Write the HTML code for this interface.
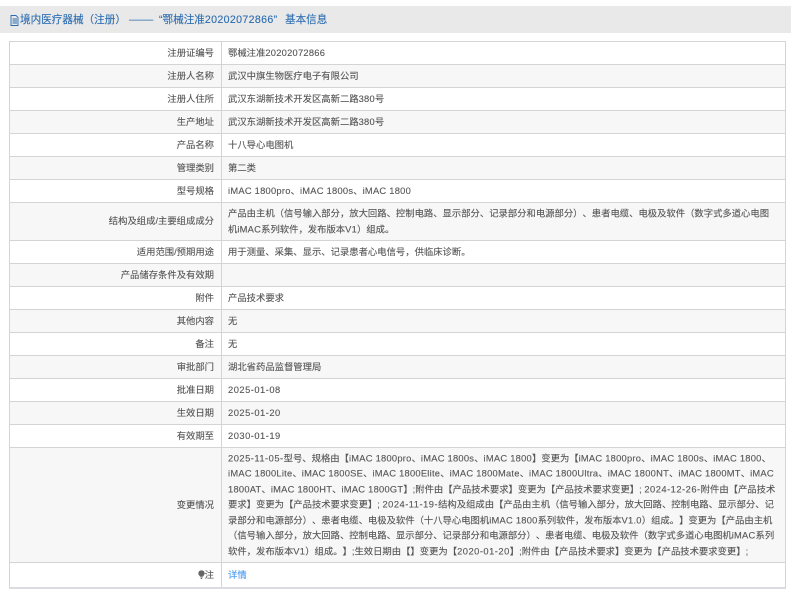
<!DOCTYPE html>
<html>
<head>
<meta charset="utf-8">
<style>
html,body{margin:0;padding:0;background:#fff;}
body{width:791px;height:590px;overflow:hidden;position:relative;font-family:"Liberation Sans","Noto Sans CJK SC",sans-serif;font-size:9.33px;color:#555;-webkit-text-stroke:.12px #555;text-spacing-trim:space-all;}
#hd{position:absolute;left:0;top:6px;width:791px;height:27px;background:#e9e9e9;color:#2b6cb0;-webkit-text-stroke:.12px #2b6cb0;font-size:10.6px;}
#hd span{position:absolute;top:1px;line-height:27px;white-space:nowrap;}
#ic{position:absolute;left:10px;top:9px;}
#tb{position:absolute;left:9px;top:41px;width:775px;height:545px;border:1px solid #d4d4d4;border-bottom:2px solid #dcdce0;box-sizing:content-box;}
.r{position:absolute;left:0;width:775px;border-bottom:1px solid #d4d4d4;box-sizing:border-box;}
.g{background:#f7f7f7;}
.l{position:absolute;left:0;width:204px;text-align:right;white-space:nowrap;top:calc(50% + .5px);transform:translateY(-50%);line-height:15.6px;}
.v{position:absolute;left:218px;white-space:nowrap;top:calc(50% + .5px);transform:translateY(-50%);line-height:15.6px;}
.e{letter-spacing:.25px;}
.d{letter-spacing:.5px;}
#dv{position:absolute;left:211px;top:0;width:1px;height:100%;background:#d4d4d4;}
a{color:#4a9bf0;text-decoration:none;-webkit-text-stroke:.12px #4a9bf0;}
</style>
</head>
<body>
<div id="hd">
<svg id="ic" width="9" height="11" viewBox="0 0 9 11"><path d="M1 .5h5l2 2v8H1zM2.500 4h4.500M2.500 6h4.500M2.500 8h4.500" fill="none" stroke="#2b6cb0" stroke-width=".9"/></svg>
<span style="left:20px">境内医疗器械（注册）</span>
<span style="left:129px;letter-spacing:0;transform-origin:left;transform:scaleX(1.14)">——</span>
<span style="left:159px">“鄂械注准<span style="position:static;letter-spacing:.35px">20202072866</span>”</span>
<span style="left:285px">基本信息</span>
</div>
<div id="tb">
<div class="r" style="top:0;height:23px"><div class="l">注册证编号</div><div class="v">鄂械注准<span class="e">20202072866</span></div></div>
<div class="r g" style="top:23px;height:23px"><div class="l">注册人名称</div><div class="v">武汉中旗生物医疗电子有限公司</div></div>
<div class="r" style="top:46px;height:23px"><div class="l">注册人住所</div><div class="v">武汉东湖新技术开发区高新二路<span class="e">380</span>号</div></div>
<div class="r g" style="top:69px;height:23px"><div class="l">生产地址</div><div class="v">武汉东湖新技术开发区高新二路<span class="e">380</span>号</div></div>
<div class="r" style="top:92px;height:23px"><div class="l">产品名称</div><div class="v">十八导心电图机</div></div>
<div class="r g" style="top:115px;height:23px"><div class="l">管理类别</div><div class="v">第二类</div></div>
<div class="r" style="top:138px;height:23px"><div class="l">型号规格</div><div class="v"><span class="e">iMAC 1800pro</span>、<span class="e">iMAC 1800s</span>、<span class="e">iMAC 1800</span></div></div>
<div class="r g" style="top:161px;height:38px"><div class="l">结构及组成/主要组成成分</div><div class="v">产品由主机（信号输入部分，放大回路、控制电路、显示部分、记录部分和电源部分）、患者电缆、电极及软件（数字式多道心电图<br>机<span class="e">iMAC</span>系列软件，发布版本<span class="e">V1</span>）组成。</div></div>
<div class="r" style="top:199px;height:23px"><div class="l">适用范围/预期用途</div><div class="v">用于测量、采集、显示、记录患者心电信号，供临床诊断。</div></div>
<div class="r g" style="top:222px;height:23px"><div class="l">产品储存条件及有效期</div></div>
<div class="r" style="top:245px;height:23px"><div class="l">附件</div><div class="v">产品技术要求</div></div>
<div class="r g" style="top:268px;height:23px"><div class="l">其他内容</div><div class="v">无</div></div>
<div class="r" style="top:291px;height:23px"><div class="l">备注</div><div class="v">无</div></div>
<div class="r g" style="top:314px;height:23px"><div class="l">审批部门</div><div class="v">湖北省药品监督管理局</div></div>
<div class="r" style="top:337px;height:23px"><div class="l">批准日期</div><div class="v d">2025-01-08</div></div>
<div class="r g" style="top:360px;height:23px"><div class="l">生效日期</div><div class="v d">2025-01-20</div></div>
<div class="r" style="top:383px;height:23px"><div class="l">有效期至</div><div class="v d">2030-01-19</div></div>
<div class="r g" style="top:406px;height:115px"><div class="l">变更情况</div><div class="v"><span class="d">2025-11-05-</span>型号、规格由【<span class="e">iMAC 1800pro</span>、<span class="e">iMAC 1800s</span>、<span class="e">iMAC 1800</span>】变更为【<span class="e">iMAC 1800pro</span>、<span class="e">iMAC 1800s</span>、<span class="e">iMAC 1800</span>、<br><span class="e">iMAC 1800Lite</span>、<span class="e">iMAC 1800SE</span>、<span class="e">iMAC 1800Elite</span>、<span class="e">iMAC 1800Mate</span>、<span class="e">iMAC 1800Ultra</span>、<span class="e">iMAC 1800NT</span>、<span class="e">iMAC 1800MT</span>、<span class="e">iMAC</span><br><span class="e">1800AT</span>、<span class="e">iMAC 1800HT</span>、<span class="e">iMAC 1800GT</span>】;附件由【产品技术要求】变更为【产品技术要求变更】; <span class="d">2024-12-26-</span>附件由【产品技术<br>要求】变更为【产品技术要求变更】; <span class="d">2024-11-19-</span>结构及组成由【产品由主机（信号输入部分，放大回路、控制电路、显示部分、记<br>录部分和电源部分）、患者电缆、电极及软件（十八导心电图机<span class="e">iMAC 1800</span>系列软件，发布版本<span class="e">V1.0</span>）组成。】变更为【产品由主机<br>（信号输入部分，放大回路、控制电路、显示部分、记录部分和电源部分）、患者电缆、电极及软件（数字式多道心电图机<span class="e">iMAC</span>系列<br>软件，发布版本<span class="e">V1</span>）组成。】;生效日期由【】变更为【<span class="d">2020-01-20</span>】;附件由【产品技术要求】变更为【产品技术要求变更】;</div></div>
<div class="r" style="top:521px;height:24px;border-bottom:0"><div class="l"><svg width="7" height="9" viewBox="0 0 7 9" style="vertical-align:-1px"><path d="M3.500 0a3.200 3.200 0 0 1 3.200 3.200c0 1.400-1.200 2.200-1.800 3.300H2.100C1.500 5.400.3 4.600.3 3.200A3.200 3.200 0 0 1 3.500 0zM2.300 7.300h2.400L4 8.800H3z" fill="#666"/></svg>注</div><div class="v"><a>详情</a></div></div>
<div id="dv"></div>
</div>
</body>
</html>
